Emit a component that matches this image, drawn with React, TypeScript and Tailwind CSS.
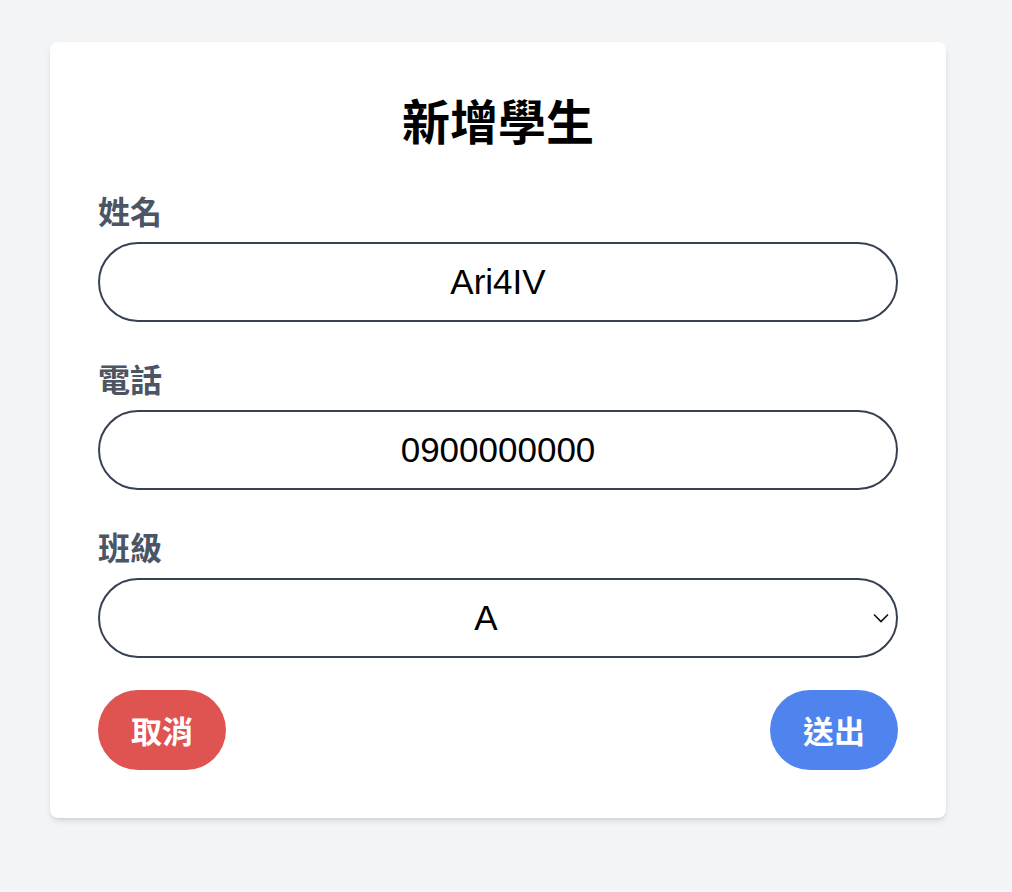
import { useState } from "react";

const cjk = "font-['Noto_Sans_CJK_TC','Noto_Sans_CJK_SC',sans-serif]";

function Field({ label, children }: { label: string; children: React.ReactNode }) {
  return (
    <div className="flex flex-col">
      <label className={`${cjk} text-[32px] leading-[36px] font-bold text-[#4b5563] mb-[14px]`}>{label}</label>
      {children}
    </div>
  );
}

export default function App() {
  const [name, setName] = useState("Ari4IV");
  const [phone, setPhone] = useState("0900000000");
  const [cls, setCls] = useState("A");

  const inputCls =
    "w-full h-[80px] rounded-full border-2 border-[#374151] bg-white text-center text-[35px] text-black font-['Liberation_Sans',Arial,sans-serif] outline-none";

  return (
    <div className="min-h-screen bg-[#f3f4f6] pt-[42px]">
      <div className="w-[896px] ml-[50px] bg-white rounded-lg shadow-md px-12 pt-[48px] pb-12">
        <h1 className={`${cjk} text-center text-[48px] leading-[58px] font-bold text-black mb-[44px]`}>新增學生</h1>
        <form className="flex flex-col gap-[38px]" onSubmit={(e) => e.preventDefault()}>
          <Field label="姓名">
            <input className={inputCls} value={name} onChange={(e) => setName(e.target.value)} />
          </Field>
          <Field label="電話">
            <input className={inputCls} value={phone} onChange={(e) => setPhone(e.target.value)} />
          </Field>
          <Field label="班級">
            <div className="relative">
              <select
                className={`${inputCls} appearance-none pr-[24px] [text-align-last:center]`}
                value={cls}
                onChange={(e) => setCls(e.target.value)}
              >
                <option value="A">A</option>
                <option value="B">B</option>
                <option value="C">C</option>
              </select>
              <svg
                className="absolute right-[9px] top-[35px] pointer-events-none"
                width="16"
                height="10"
                viewBox="0 0 16 10"
                fill="none"
              >
                <path d="M1 1.5L8 8.5L15 1.5" stroke="#111" strokeWidth="1.6" />
              </svg>
            </div>
          </Field>
          <div className="flex justify-between -mt-[6px]">
            <button
              type="button"
              className={`${cjk} w-[128px] h-[80px] rounded-full bg-[#df5350] text-white text-[31px] font-bold`}
            >
              取消
            </button>
            <button
              type="submit"
              className={`${cjk} w-[128px] h-[80px] rounded-full bg-[#4f83ee] text-white text-[31px] font-bold`}
            >
              送出
            </button>
          </div>
        </form>
      </div>
    </div>
  );
}
